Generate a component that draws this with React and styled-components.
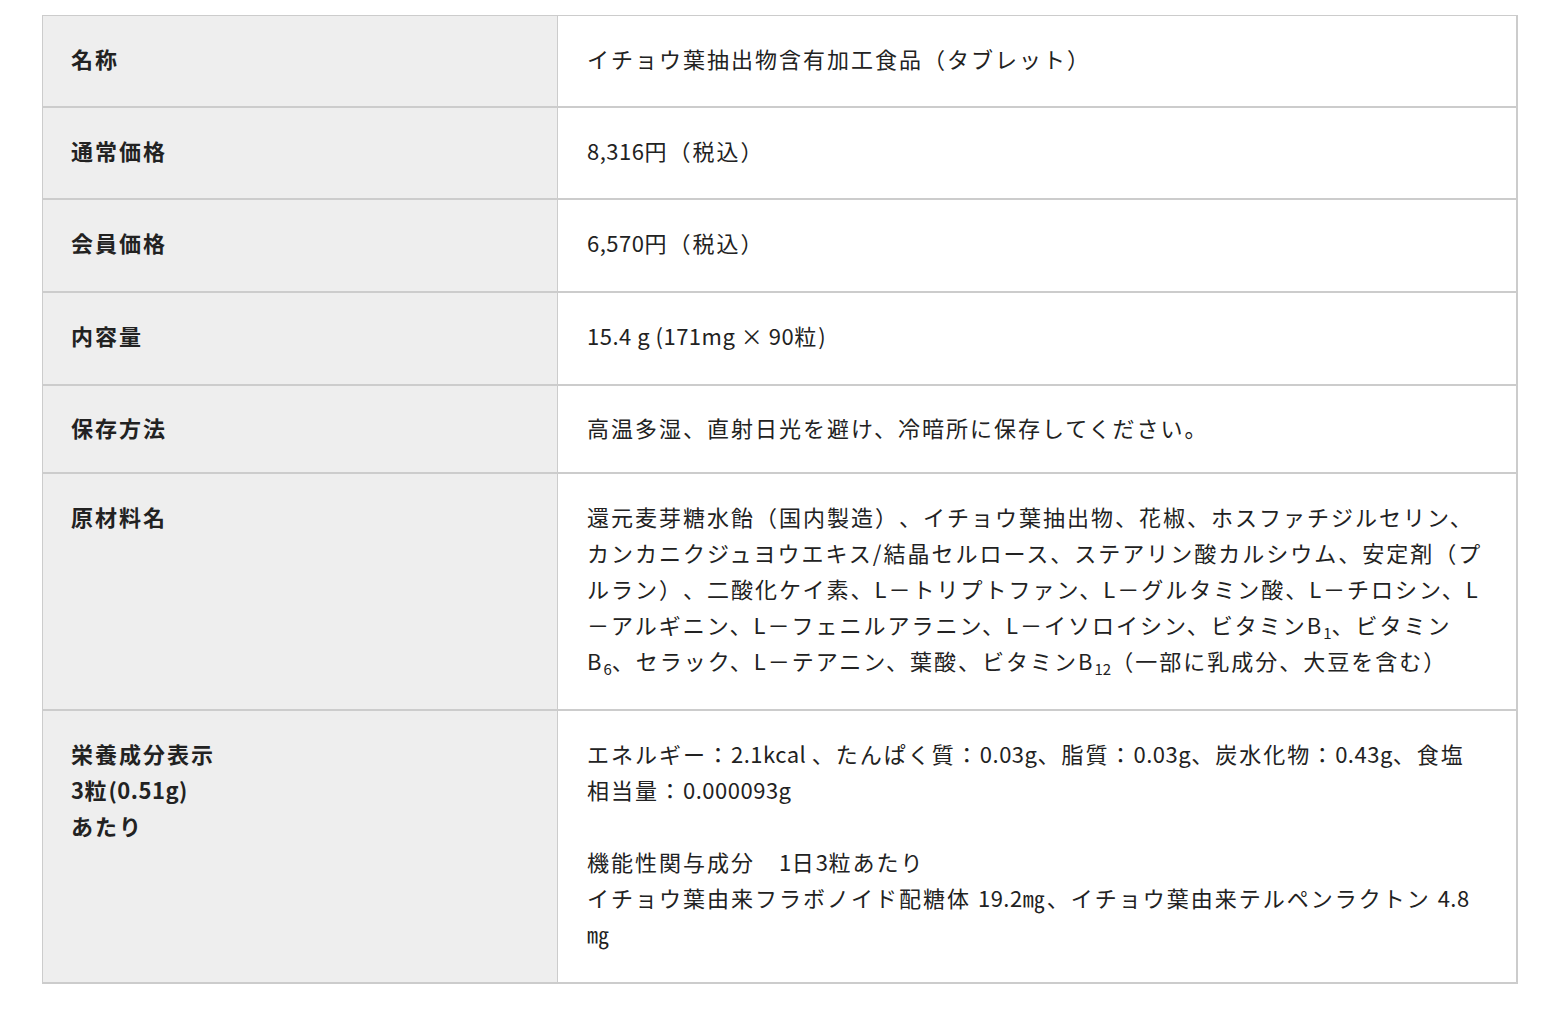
import React from "react";
import styled, { createGlobalStyle } from "styled-components";

const GlobalStyle = createGlobalStyle`
    body {
        margin: 0;
        background: #ffffff;
        font-family: "Noto Sans CJK JP", "Noto Sans", sans-serif;
        color: #222222;
    }
`

const Page = styled.div`
    width: 1560px;
    padding: 15px 42px 28px 42px;
    box-sizing: border-box;
`

const Table = styled.table`
    width: 100%;
    border-collapse: separate;
    border-spacing: 0;
    table-layout: fixed;
    font-size: 22px;
    line-height: 36px;
    letter-spacing: 2px;
    text-spacing-trim: space-all;
`

const Row = styled.tr`
    &:first-child > * {
        border-top: 1px solid #cccccc;
    }
`

// top / bottom padding per row kind
const pads = {
    normal: "24px 28px 30px",
    loose: "24px 28px 31px",
    short: "23px 28px 27px",
}

const Label = styled.th`
    width: 516px;
    box-sizing: border-box;
    background: #eeeeee;
    text-align: left;
    vertical-align: top;
    font-weight: 700;
    padding: ${(p) => pads[p.$kind || "normal"]};
    border-left: 1px solid #cccccc;
    border-right: 1px solid #cccccc;
    border-bottom: 2px solid #cccccc;
`

const Value = styled.td`
    vertical-align: top;
    font-weight: 400;
    padding: ${(p) => pads[p.$kind || "normal"]};
    padding-left: 29px;
    border-right: 2px solid #cccccc;
    border-bottom: 2px solid #cccccc;
`

const Narrow = styled.span`
    letter-spacing: 0.5px;
`

const Gap = styled.div`
    height: 36px;
`

const Sub = styled.sub`
    font-size: 15px;
    line-height: 0;
    letter-spacing: 0;
`

export default function App() {
    return (
        <Page>
            <GlobalStyle />
            <Table>
                <tbody>
                    <Row>
                        <Label>名称</Label>
                        <Value>イチョウ葉抽出物含有加工食品（タブレット）</Value>
                    </Row>
                    <Row>
                        <Label>通常価格</Label>
                        <Value><Narrow>8,316</Narrow>円（税込）</Value>
                    </Row>
                    <Row>
                        <Label $kind="loose">会員価格</Label>
                        <Value $kind="loose"><Narrow>6,570</Narrow>円（税込）</Value>
                    </Row>
                    <Row>
                        <Label $kind="loose">内容量</Label>
                        <Value $kind="loose"><Narrow>15.4 g (171mg × 90</Narrow>粒<Narrow>)</Narrow></Value>
                    </Row>
                    <Row>
                        <Label $kind="short">保存方法</Label>
                        <Value $kind="short">高温多湿、直射日光を避け、冷暗所に保存してください。</Value>
                    </Row>
                    <Row>
                        <Label $kind="loose">原材料名</Label>
                        <Value $kind="loose">
                            還元麦芽糖水飴（国内製造）、イチョウ葉抽出物、花椒、ホスファチジルセリン、<br />
                            カンカニクジュヨウエキス/結晶セルロース、ステアリン酸カルシウム、安定剤（プ<br />
                            ルラン）、二酸化ケイ素、L－トリプトファン、L－グルタミン酸、L－チロシン、L<br />
                            －アルギニン、L－フェニルアラニン、L－イソロイシン、ビタミンB<Sub>1</Sub>、ビタミン<br />
                            B<Sub>6</Sub>、セラック、L－テアニン、葉酸、ビタミンB<Sub>12</Sub>（一部に乳成分、大豆を含む）
                        </Value>
                    </Row>
                    <Row>
                        <Label $kind="loose">
                            栄養成分表示<br />
                            <Narrow>3</Narrow>粒<Narrow>(0.51g)</Narrow><br />
                            あたり
                        </Label>
                        <Value $kind="loose">
                            エネルギー：<Narrow>2.1kcal </Narrow>、たんぱく質：<Narrow>0.03g</Narrow>、脂質：<Narrow>0.03g</Narrow>、炭水化物：<Narrow>0.43g</Narrow>、食塩<br />
                            相当量：<Narrow>0.000093g</Narrow>
                            <Gap />
                            機能性関与成分　<Narrow>1</Narrow>日<Narrow>3</Narrow>粒あたり<br />
                            イチョウ葉由来フラボノイド配糖体 <Narrow>19.2</Narrow>㎎、イチョウ葉由来テルペンラクトン <Narrow>4.8</Narrow><br />
                            ㎎
                        </Value>
                    </Row>
                </tbody>
            </Table>
        </Page>
    )
}
